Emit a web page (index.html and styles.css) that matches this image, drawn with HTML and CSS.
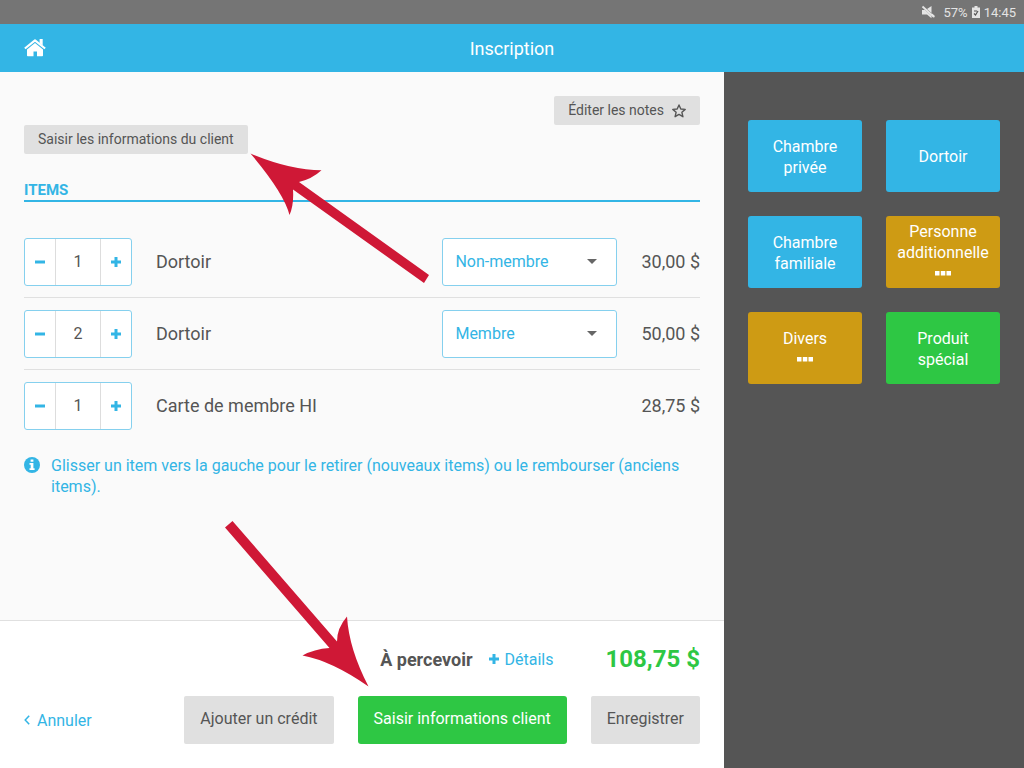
FILE: index.html
```html
<!DOCTYPE html>
<html lang="fr">
<head>
<meta charset="utf-8">
<meta name="viewport" content="width=device-width, initial-scale=1">
<title>Inscription</title>
<link rel="stylesheet" href="styles.css">
</head>
<body>
<div class="app">
  <div class="status">
    <svg class="status-mute" viewBox="0 0 14 14" aria-hidden="true"><path fill="currentColor" d="M1 5h3l6.500 6v2.200L6 9.500H1zM6 4l4.500-3v7zM11 8.500l2.500 2v2L11 10.500z"/><path stroke="currentColor" stroke-width="1.800" d="M1.500 1.500l11.500 10.500"/></svg>
    <span>57%</span>
    <svg class="status-battery" viewBox="0 0 8 12" aria-hidden="true"><path fill="currentColor" d="M2.500 0h3v1.500H8V12H0V1.500h2.500z"/><path fill="none" stroke="#555" stroke-width="1.200" d="M2 7.500l1.500 1.500L6 5M2 5h3"/></svg>
    <span>14:45</span>
  </div>
  <header class="topbar">
    <a class="home" href="#" aria-label="Accueil"><svg viewBox="0 0 22 18" aria-hidden="true"><path fill="currentColor" d="M11 4L19 10.600v5.900q0 .8-.8.800H13V12.500H9.500v4.800H3.800q-.8 0-.8-.800v-5.900z"/><path fill="none" stroke="currentColor" stroke-width="2.200" stroke-linejoin="round" d="M.9 9.500L11 1.300l10.100 8.200"/><path fill="currentColor" d="M15.600 0h3.100v6.500l-3.100-2.300z"/></svg></a>
    <h1 class="title">Inscription</h1>
  </header>
  <div class="body">
    <main class="main">
      <section class="order">
        <div class="notes"><button class="btn btn-small" type="button">Éditer les notes <svg class="star" viewBox="0 0 14 14" aria-hidden="true"><path fill="none" stroke="currentColor" stroke-width="1.400" stroke-linejoin="round" d="M7 1l1.800 4 4.400.4-3.300 2.900 1 4.400L7 10.400l-3.900 2.300 1-4.400L.8 5.400 5.200 5z"/></svg></button></div>
        <div><button class="btn btn-small" type="button">Saisir les informations du client</button></div>
        <h2 class="heading">ITEMS</h2>
        <ul class="items">
          <li class="item">
            <div class="stepper">
              <button type="button" aria-label="Diminuer"><svg class="sign" viewBox="0 0 10 10"><path d="M0 5h10"/></svg></button>
              <input type="text" value="1" aria-label="Quantité">
              <button type="button" aria-label="Augmenter"><svg class="sign" viewBox="0 0 10 10"><path d="M0 5h10M5 0v10"/></svg></button>
            </div>
            <span class="name">Dortoir</span>
            <div class="picker">
              <select aria-label="Tarif"><option>Non-membre</option><option>Membre</option></select>
              <svg class="caret" viewBox="0 0 10 5" aria-hidden="true"><path fill="currentColor" d="M0 0h10L5 5z"/></svg>
            </div>
            <span class="price">30,00 $</span>
          </li>
          <li class="item">
            <div class="stepper">
              <button type="button" aria-label="Diminuer"><svg class="sign" viewBox="0 0 10 10"><path d="M0 5h10"/></svg></button>
              <input type="text" value="2" aria-label="Quantité">
              <button type="button" aria-label="Augmenter"><svg class="sign" viewBox="0 0 10 10"><path d="M0 5h10M5 0v10"/></svg></button>
            </div>
            <span class="name">Dortoir</span>
            <div class="picker">
              <select aria-label="Tarif"><option>Membre</option><option>Non-membre</option></select>
              <svg class="caret" viewBox="0 0 10 5" aria-hidden="true"><path fill="currentColor" d="M0 0h10L5 5z"/></svg>
            </div>
            <span class="price">50,00 $</span>
          </li>
          <li class="item">
            <div class="stepper">
              <button type="button" aria-label="Diminuer"><svg class="sign" viewBox="0 0 10 10"><path d="M0 5h10"/></svg></button>
              <input type="text" value="1" aria-label="Quantité">
              <button type="button" aria-label="Augmenter"><svg class="sign" viewBox="0 0 10 10"><path d="M0 5h10M5 0v10"/></svg></button>
            </div>
            <span class="name">Carte de membre HI</span>
            <span class="price">28,75 $</span>
          </li>
        </ul>
        <p class="hint"><svg class="info" viewBox="0 0 16 16" aria-hidden="true"><circle cx="8" cy="8" r="8" fill="currentColor"/><path fill="#fff" d="M6.600 2.500h2.800v2.300H6.600zM5.500 6h3.900v5.200h1.200v1.900H5.500v-1.900h1.200V7.800H5.500z"/></svg><span>Glisser un item vers la gauche pour le retirer (nouveaux items) ou le rembourser (anciens items).</span></p>
      </section>
      <footer class="footer">
        <div class="total">
          <strong class="due">À percevoir</strong>
          <a class="link details" href="#"><svg class="sign" viewBox="0 0 10 10"><path d="M0 5h10M5 0v10"/></svg>Détails</a>
          <strong class="amount">108,75 $</strong>
        </div>
        <div class="actions">
          <a class="link cancel" href="#"><svg class="chevron" viewBox="0 0 6 10" aria-hidden="true"><path fill="none" stroke="currentColor" stroke-width="1.500" d="M5.200.7L1.200 5l4 4.300"/></svg>Annuler</a>
          <button class="btn" type="button">Ajouter un crédit</button>
          <button class="btn btn-go" type="button">Saisir informations client</button>
          <button class="btn" type="button">Enregistrer</button>
        </div>
      </footer>
    </main>
    <aside class="side">
      <button class="tile" type="button">Chambre privée</button>
      <button class="tile" type="button">Dortoir</button>
      <button class="tile" type="button">Chambre familiale</button>
      <button class="tile tile-gold" type="button">Personne additionnelle<svg class="dots" viewBox="0 0 16 5" aria-hidden="true"><path fill="currentColor" d="M0 0h4.500v4.500H0zM5.800 0h4.500v4.500H5.800zM11.500 0H16v4.500h-4.500z"/></svg></button>
      <button class="tile tile-gold" type="button">Divers<svg class="dots" viewBox="0 0 16 5" aria-hidden="true"><path fill="currentColor" d="M0 0h4.500v4.500H0zM5.800 0h4.500v4.500H5.800zM11.500 0H16v4.500h-4.500z"/></svg></button>
      <button class="tile tile-green" type="button">Produit spécial</button>
    </aside>
  </div>
  <svg class="arrows" width="1024" height="768" viewBox="0 0 1024 768" aria-hidden="true">
    <path d="M250.500 153.500Q290 170 321.500 170.300Q312 179 299 182L429 275L424 283L293 189.500Q294 205 289.500 215Q284 193 250.500 153.500z"/>
    <path d="M368.500 686.500Q349 649 347 616.500Q337 628 337 641.500L232.500 521L225 527.500L329.500 648Q314 649 302.500 655.500Q332 661 368.500 686.500z"/>
  </svg>
</div>
</body>
</html>
```
FILE: styles.css
```css
* { box-sizing: border-box; }
body { margin: 0; font-family: Roboto, "Liberation Sans", sans-serif; font-size: 16px; line-height: 21px; color: #555; }
button, input, select { font: inherit; color: inherit; margin: 0; }
button { cursor: pointer; }
h1, h2, p, ul { margin: 0; padding: 0; }
svg { flex: none; }

.app { position: relative; display: flex; flex-direction: column; min-height: 100vh; }

.status { display: flex; align-items: center; justify-content: flex-end; gap: 4px; height: 24px; padding: 0 8px; background: #757575; color: #e4e4e4; font-size: 13px; }
.status-mute { width: 14px; height: 14px; margin-right: 4px; }
.status-battery { width: 8px; height: 12px; }

.topbar { display: grid; grid-template-columns: 1fr auto 1fr; align-items: center; height: 48px; padding: 0 24px; background: #33b5e5; color: #fff; }
.home { display: flex; color: inherit; }
.home svg { width: 22px; height: 18px; }
.title { font-size: 18px; font-weight: 400; }

.body { display: flex; flex: 1; }
.main { display: flex; flex: 1; flex-direction: column; background: #fafafa; }
.order { flex: 1; padding: 24px; }
.notes { display: flex; justify-content: flex-end; }

.btn { height: 48px; padding: 0 16px 4px; border: 0; border-radius: 2px; background: #e0e0e0; white-space: nowrap; }
.btn-small { display: flex; align-items: center; gap: 8px; height: 29px; padding: 0 14px; font-size: 14px; }
.btn-go { background: #2ec744; color: #fff; border-radius: 3px; }
.star { width: 14px; height: 14px; }

.heading { margin-top: 26px; border-bottom: 2px solid #33b5e5; color: #33b5e5; font-size: 15px; font-weight: 700; line-height: 20px; }

.items { padding-top: 24px; list-style: none; }
.item { display: flex; align-items: center; gap: 24px; height: 72px; border-bottom: 1px solid #e0e0e0; font-size: 18px; }
.item:last-child { border-color: transparent; }
.name { flex: 1; }
.name, .price { padding-bottom: 1px; }
.price { white-space: nowrap; }

.stepper { display: flex; width: 108px; height: 48px; border: 1px solid #85d0ee; border-radius: 3px; background: #fff; }
.stepper button { display: flex; flex: 1; align-items: center; justify-content: center; padding: 0; border: 0; background: none; color: #33b5e5; }
.stepper input { width: 46px; padding: 0; border: solid #ddd; border-width: 0 1px; background: none; font-size: 16px; text-align: center; }
.sign { width: 10px; height: 10px; fill: none; stroke: currentColor; stroke-width: 3; }

.picker { position: relative; width: 175px; height: 48px; }
.picker select { width: 100%; height: 100%; padding: 0 12px 1px; border: 1px solid #85d0ee; border-radius: 3px; background: #fff; color: #33b5e5; font-size: 16px; appearance: none; }
.caret { position: absolute; top: 21px; right: 20px; width: 10px; height: 5px; color: #666; pointer-events: none; }

.hint { display: flex; gap: 11px; margin-top: 13px; color: #33b5e5; }
.info { width: 16px; height: 16px; margin-top: 2px; }

.footer { padding: 24px; border-top: 1px solid #e0e0e0; background: #fff; }
.total { display: flex; align-items: center; justify-content: flex-end; height: 28px; }
.due { font-size: 18px; }
.link { display: flex; align-items: center; color: #33b5e5; text-decoration: none; }
.details { gap: 6px; margin: 0 52px 0 16px; }
.amount { color: #2ec744; font-size: 24px; }
.actions { display: flex; align-items: center; gap: 24px; margin-top: 23px; }
.cancel { gap: 7px; margin-right: auto; }
.chevron { width: 6px; height: 10px; }

.side { display: grid; flex: 0 0 300px; grid-template-columns: 1fr 1fr; grid-auto-rows: 72px; align-content: start; gap: 24px; padding: 48px 24px; background: #555; }
.tile { display: flex; flex-direction: column; align-items: center; justify-content: center; padding: 1px 8px 0; border: 0; border-radius: 3px; background: #33b5e5; color: #fff; }
.tile-gold { background: #ce9b14; }
.tile-green { background: #2ec744; }
.dots { width: 16px; height: 5px; margin: 8px 0; }

.arrows { position: absolute; top: 0; left: 0; fill: #cf1836; pointer-events: none; }
```
